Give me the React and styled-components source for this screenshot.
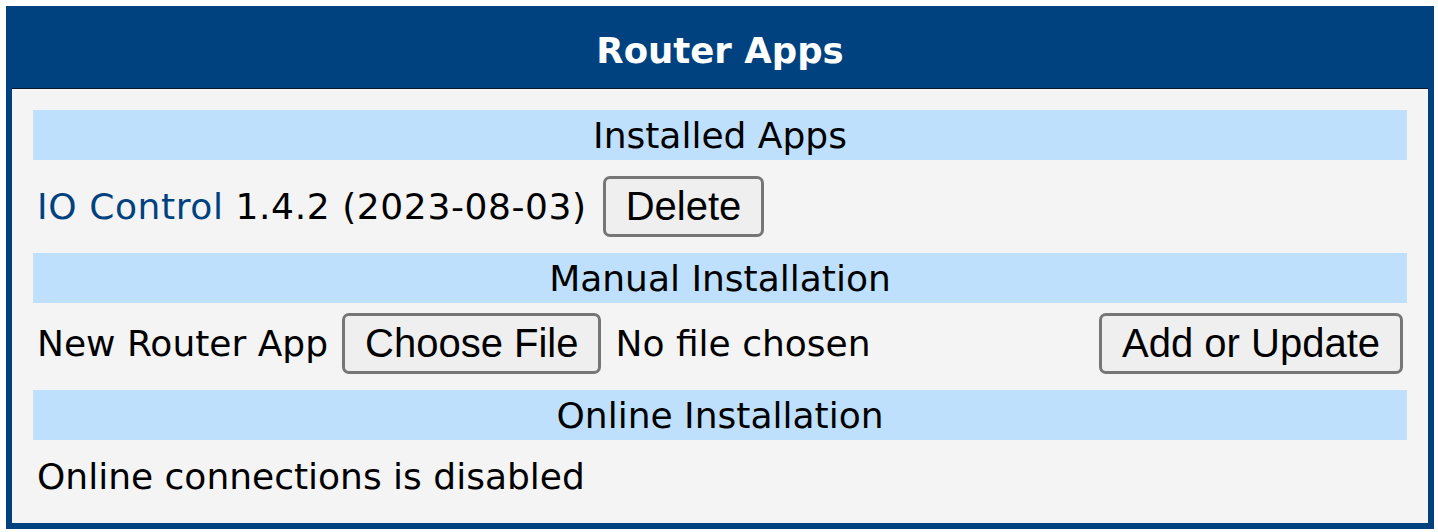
import React from 'react'
import styled, { createGlobalStyle } from 'styled-components'

// global page reset
const GlobalStyle = createGlobalStyle`
  html, body {
    margin: 0;
    padding: 0;
    background: #ffffff;
  }
  body {
    font-family: "DejaVu Sans", Verdana, sans-serif;
    color: #000000;
  }
`

// styled components
const Page = styled.div`
  padding: 6px 4px 3px 6px;
`

const Panel = styled.section`
  border: 6px solid #00427f;
  background: #f4f4f4;
`

const Header = styled.h1`
  margin: 0;
  height: 76px;
  display: flex;
  align-items: center;
  justify-content: center;
  background: #00427f;
  border-bottom: 1px solid #0b1726;
  color: #ffffff;
  font-size: 35.5px;
  font-weight: bold;
`

const Body = styled.div`
  padding: 21px;
`

const SectionBar = styled.div`
  height: 50px;
  display: flex;
  align-items: center;
  justify-content: center;
  background: #bee0fd;
  font-size: 36px;
`

const Row = styled.div`
  display: flex;
  align-items: center;
  gap: 14px;
  padding: ${props => props.$pt}px 4px ${props => props.$pb}px 4px;
  font-size: 36px;
  line-height: 42px;
`

const AppInfo = styled.span`
  letter-spacing: 0.6px;
  margin-right: 2px;
`

const AppLink = styled.a`
  color: #00427f;
  text-decoration: none;
`

const Button = styled.button`
  height: 61px;
  padding: 0 20px;
  border: 3px solid #767676;
  border-radius: 7px;
  background: #efefef;
  color: #000000;
  font-family: "Liberation Sans", Arial, sans-serif;
  font-size: 40px;
  margin-left: ${props => (props.$right ? 'auto' : '0')};
`

// component
export default function App() {
  return (
    <Page>
      <GlobalStyle />
      <Panel>
        <Header>Router Apps</Header>
        <Body>
          <SectionBar>Installed Apps</SectionBar>
          <Row $pt={16} $pb={16}>
            <AppInfo>
              <AppLink href="#">IO Control</AppLink> 1.4.2 (2023-08-03)
            </AppInfo>
            <Button>Delete</Button>
          </Row>
          <SectionBar>Manual Installation</SectionBar>
          <Row $pt={10} $pb={16}>
            <span>New Router App</span>
            <Button>Choose File</Button>
            <span>No file chosen</span>
            <Button $right>Add or Update</Button>
          </Row>
          <SectionBar>Online Installation</SectionBar>
          <Row $pt={16} $pb={4}>
            <span>Online connections is disabled</span>
          </Row>
        </Body>
      </Panel>
    </Page>
  )
}
